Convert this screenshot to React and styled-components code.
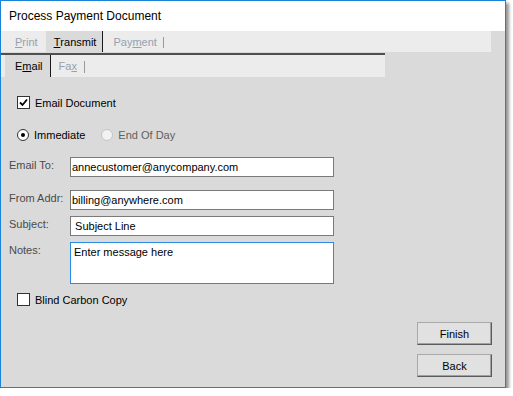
import React from 'react';
import styled, { createGlobalStyle } from 'styled-components';

const GlobalStyle = createGlobalStyle`
  html, body {
    margin: 0;
    padding: 0;
    background: #ffffff;
  }
  body {
    font-family: "Liberation Sans", Arial, sans-serif;
    font-size: 11px;
    color: #000;
  }
`;

const Window = styled.div`
  box-sizing: border-box;
  width: 506px;
  height: 388px;
  border: 1px solid #1883d7;
  background: #dadada;
  box-shadow: 3px 3px 3px rgba(0, 0, 0, 0.42);
  display: flex;
  flex-direction: column;
`;

const TitleBar = styled.div`
  height: 30px;
  background: #ffffff;
  display: flex;
  align-items: center;
  padding-left: 8px;
  font-size: 12px;
  color: #000;
`;

const TabStrip = styled.div`
  height: ${(p) => p.height}px;
  width: ${(p) => p.width}px;
  background: #ececec;
  display: flex;
  align-items: stretch;
  padding-left: ${(p) => p.pad}px;
  box-sizing: border-box;
  margin-top: ${(p) => p.top || 0}px;
  border-top: ${(p) => (p.line ? '2px solid #4f4f4f' : 'none')};
  flex-shrink: 0;
`;

const Tab = styled.div`
  position: relative;
  display: flex;
  align-items: center;
  padding: 0 ${(p) => p.pr}px 0 ${(p) => p.pl}px;
  background: ${(p) => (p.active ? '#dadada' : 'transparent')};
  color: ${(p) => (p.active ? '#000' : '#95a1af')};
  font-size: 11px;
  border-right: ${(p) => (p.active ? '1px solid #1a1a1a' : '1px solid transparent')};

  &::after {
    content: '';
    display: ${(p) => (p.sep ? 'block' : 'none')};
    position: absolute;
    right: -1px;
    top: 6px;
    bottom: 4px;
    width: 1px;
    background: #9a9a9a;
  }
`;

const Content = styled.div`
  flex: 1;
  display: flex;
  flex-direction: column;
  padding: 19px 0 0 8px;
`;

const CheckRow = styled.label`
  display: flex;
  align-items: center;
  gap: 5px;
  height: 13px;
  padding-left: ${(p) => (p.flush ? 0 : 8)}px;
  margin-top: ${(p) => p.top || 0}px;
  color: ${(p) => (p.disabled ? '#5f5f5f' : '#000')};
`;

const Box = styled.span`
  box-sizing: border-box;
  width: 13px;
  height: 13px;
  background: #fff;
  border: 1px solid #333;
  display: flex;
  align-items: center;
  justify-content: center;
`;

const RadioGroup = styled.div`
  display: flex;
  align-items: center;
  gap: 16px;
  margin-top: ${(p) => p.top}px;
`;

const Radio = styled.span`
  box-sizing: border-box;
  width: 12px;
  height: 12px;
  border-radius: 50%;
  border: 1px solid ${(p) => (p.disabled ? '#c4c4c4' : '#333')};
  background: ${(p) => (p.disabled ? '#f2f2f2' : '#fff')};
  display: flex;
  align-items: center;
  justify-content: center;

  &::after {
    content: '';
    display: ${(p) => (p.checked ? 'block' : 'none')};
    width: 4px;
    height: 4px;
    border-radius: 50%;
    background: #000;
  }
`;

const FieldRow = styled.div`
  display: grid;
  grid-template-columns: 61px 264px;
  margin-top: ${(p) => p.top}px;
`;

const FieldLabel = styled.div`
  padding-top: 2px;
  color: #4a4a4a;
  line-height: 13px;
`;

const TextBox = styled.div`
  box-sizing: border-box;
  height: ${(p) => p.height || 20}px;
  background: #fff;
  border: 1px solid ${(p) => (p.focused ? '#2a8ae6' : '#7a7a7a')};
  padding: ${(p) => (p.multi ? '3px 0 0 3px' : '0 0 0 1px')};
  display: flex;
  align-items: ${(p) => (p.multi ? 'flex-start' : 'center')};
  color: #000;
`;

const ButtonStack = styled.div`
  align-self: flex-end;
  display: flex;
  flex-direction: column;
  gap: 9px;
  margin: 16px 13px 0 0;
`;

const Button = styled.div`
  box-sizing: border-box;
  width: 75px;
  height: 23px;
  background: #e1e1e1;
  border: 1px solid;
  border-color: #a9a9a9 #5c5c5c #5c5c5c #a9a9a9;
  box-shadow: inset -1px -1px 0 #a0a0a0;
  display: flex;
  align-items: center;
  justify-content: center;
  color: #000;
`;

function Check() {
  return (
    <Box>
      <svg width="9" height="9" viewBox="0 0 9 9">
        <path d="M1 4.5 L3.5 7 L8 1.5" fill="none" stroke="#000" strokeWidth="1.8" />
      </svg>
    </Box>
  );
}

export default function App() {
  return (
    <>
      <GlobalStyle />
      <Window>
        <TitleBar>Process Payment Document</TitleBar>
        <TabStrip height={21} width={490} pad={6}>
          <Tab pl={8} pr={7}><u>P</u>rint</Tab>
          <Tab active pl={8} pr={6}><u>T</u>ransmit</Tab>
          <Tab sep pl={10} pr={6}>Pay<u>m</u>ent</Tab>
        </TabStrip>
        <TabStrip height={24} width={384} pad={4} top={1} line>
          <Tab active pl={10} pr={7}>E<u>m</u>ail</Tab>
          <Tab sep pl={8} pr={7}>Fa<u>x</u></Tab>
        </TabStrip>
        <Content>
          <CheckRow>
            <Check />
            Email Document
          </CheckRow>
          <RadioGroup top={19}>
            <CheckRow>
              <Radio checked />
              Immediate
            </CheckRow>
            <CheckRow flush disabled>
              <Radio disabled />
              End Of Day
            </CheckRow>
          </RadioGroup>
          <FieldRow top={16}>
            <FieldLabel>Email To:</FieldLabel>
            <TextBox>annecustomer@anycompany.com</TextBox>
          </FieldRow>
          <FieldRow top={13}>
            <FieldLabel>From Addr:</FieldLabel>
            <TextBox>billing@anywhere.com</TextBox>
          </FieldRow>
          <FieldRow top={6}>
            <FieldLabel>Subject:</FieldLabel>
            <TextBox>&nbsp;Subject Line</TextBox>
          </FieldRow>
          <FieldRow top={6}>
            <FieldLabel>Notes:</FieldLabel>
            <TextBox multi focused height={42}>Enter message here</TextBox>
          </FieldRow>
          <CheckRow top={9}>
            <Box />
            Blind Carbon Copy
          </CheckRow>
          <ButtonStack>
            <Button>Finish</Button>
            <Button>Back</Button>
          </ButtonStack>
        </Content>
      </Window>
    </>
  );
}
